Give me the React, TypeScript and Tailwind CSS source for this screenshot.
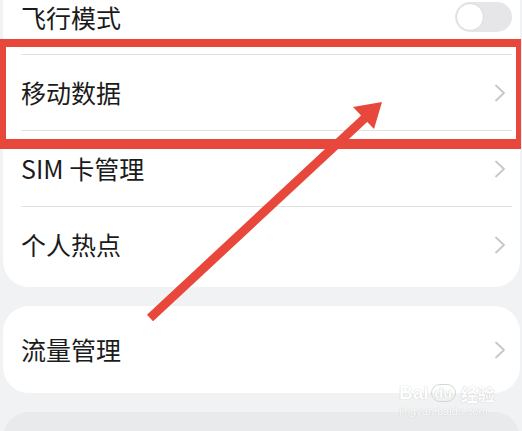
import React from "react";

const font = { fontFamily: '"Noto Sans CJK SC", "Noto Sans", sans-serif' };

function Chevron() {
  return (
    <svg width="12" height="18" viewBox="0 0 12 18" className="shrink-0">
      <path d="M2 1.5 L10 9 L2 16.5" fill="none" stroke="#c7c7c9" strokeWidth="1.8" strokeLinecap="round" strokeLinejoin="round" />
    </svg>
  );
}

function Row({ label }: { label: string }) {
  return (
    <div className="flex h-[75px] items-center justify-between pl-[18px] pr-[14px]">
      <span className="text-[25px] leading-none text-[#1b1b1b]">{label}</span>
      <Chevron />
    </div>
  );
}

function Divider() {
  return <div className="ml-[18px] mr-[8px] h-px bg-[#e2e2e4]" />;
}

export default function App() {
  return (
    <div className="relative h-[431px] w-[522px] overflow-hidden bg-[#f1f2f4]" style={font}>
      <div className="flex flex-col gap-[19px] pl-[3px] pr-[2px]">
        <div className="rounded-b-[26px] bg-white pb-[5px]">
          <div className="flex h-[54px] items-center justify-between pb-[20px] pl-[18px] pr-[8px]">
            <span className="text-[25px] leading-none text-[#1b1b1b]">飞行模式</span>
            <div className="flex h-[30px] w-[57px] items-center rounded-full bg-[#e6e6e8] p-[1px]">
              <div className="h-[28px] w-[28px] rounded-full border border-[#dcdcdc] bg-white" />
            </div>
          </div>
          <Divider />
          <Row label="移动数据" />
          <Divider />
          <Row label="SIM 卡管理" />
          <Divider />
          <Row label="个人热点" />
        </div>
        <div className="flex h-[87px] items-center justify-between rounded-[26px] bg-white pl-[18px] pr-[14px]">
          <span className="text-[25px] leading-none text-[#1b1b1b]">流量管理</span>
          <Chevron />
        </div>
        <div className="h-[60px] rounded-t-[26px] bg-[#e9eaec]" />
      </div>

      {/* red highlight box */}
      <div className="pointer-events-none absolute left-0 top-[39px] h-[110px] w-[521px] border-b-[10px] border-l-[6px] border-r-[5px] border-t-[8px] border-[#e8483b]" />

      {/* arrow */}
      <svg className="pointer-events-none absolute left-0 top-0" width="522" height="431" viewBox="0 0 522 431">
        <line x1="150" y1="318" x2="366" y2="117" stroke="#e8483b" strokeWidth="9" />
        <polygon points="382,102 353,107 374,129" fill="#e8483b" />
      </svg>

      {/* watermark */}
      <div className="pointer-events-none absolute left-[399px] top-[383px] flex flex-col items-start leading-none">
        <div className="flex items-end gap-[2px]">
          <span className="text-[19px] font-bold text-white [text-shadow:0_0_1px_#b9b9b9]" style={{ fontFamily: '"Liberation Sans", sans-serif' }}>
            Bai
          </span>
          <span className="flex h-[18px] items-center rounded-full border border-[#d6d6d6] px-[3px] text-[14px] font-bold text-white [text-shadow:0_0_1px_#a9a9a9]" style={{ fontFamily: '"Liberation Sans", sans-serif' }}>
            du
          </span>
          <span className="ml-[3px] text-[17px] font-bold text-white [text-shadow:0_0_1px_#b0b0b0]">经验</span>
        </div>
        <span className="mt-[4px] text-[11px] text-white [text-shadow:0_0_1px_#b9b9b9]" style={{ fontFamily: '"Liberation Sans", sans-serif' }}>
          jingyan.baidu.com
        </span>
      </div>
    </div>
  );
}
